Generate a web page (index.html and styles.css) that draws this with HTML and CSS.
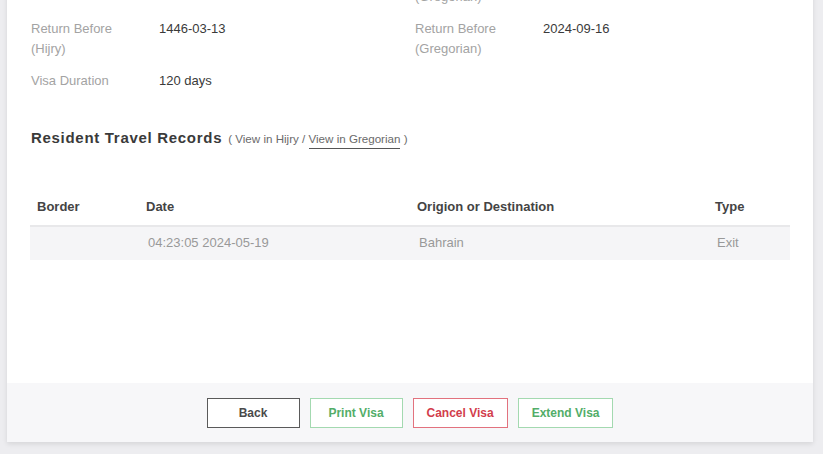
FILE: index.html
```html
<!DOCTYPE html>
<html lang="en">
<head>
<meta charset="utf-8">
<title>Visa Details</title>
<link rel="stylesheet" href="styles.css">
</head>
<body>
<div class="page">
  <div class="card">
    <div class="card-body">
      <div class="details">
        <div class="field">
          <div class="label">Issue Date</div>
          <div class="value"></div>
        </div>
        <div class="field">
          <div class="label">Issue Date<br>(Gregorian)</div>
          <div class="value"></div>
        </div>
        <div class="field">
          <div class="label">Return Before<br>(Hijry)</div>
          <div class="value">1446-03-13</div>
        </div>
        <div class="field">
          <div class="label">Return Before<br>(Gregorian)</div>
          <div class="value">2024-09-16</div>
        </div>
        <div class="field">
          <div class="label">Visa Duration</div>
          <div class="value">120 days</div>
        </div>
      </div>

      <div class="records-title">
        <h2>Resident Travel Records</h2>
        <span class="switch">( <span class="opt">View in Hijry</span> / <span class="opt active">View in Gregorian</span> )</span>
      </div>

      <table class="records">
        <thead>
          <tr>
            <th class="c-border">Border</th>
            <th class="c-date">Date</th>
            <th class="c-dest">Origion or Destination</th>
            <th class="c-type">Type</th>
          </tr>
        </thead>
        <tbody>
          <tr>
            <td></td>
            <td>04:23:05 2024-05-19</td>
            <td>Bahrain</td>
            <td>Exit</td>
          </tr>
        </tbody>
      </table>
    </div>
    <div class="card-footer">
      <button class="btn btn-back">Back</button>
      <button class="btn btn-green">Print Visa</button>
      <button class="btn btn-red">Cancel Visa</button>
      <button class="btn btn-green">Extend Visa</button>
    </div>
  </div>
</div>
</body>
</html>
```

FILE: styles.css
```css
* { box-sizing: border-box; }

html, body {
  margin: 0;
  padding: 0;
  height: 100%;
  overflow: hidden;
}

body {
  background: #ededf0;
  font-family: "Liberation Sans", Arial, sans-serif;
  color: #333;
}

.page {
  padding: 0 10px 0 7px;
}

.card {
  margin-top: -40px;
  background: #ffffff;
  box-shadow: 0 2px 5px rgba(0, 0, 0, 0.10);
}

.card-body {
  padding: 7px 23px 123px 24px;
}

.details {
  display: grid;
  grid-template-columns: 384px 1fr;
  row-gap: 12px;
}

.field {
  display: flex;
  font-size: 13px;
  line-height: 20px;
}

.label {
  width: 128px;
  flex: none;
  color: #a3a3a3;
}

.value {
  color: #3a3a3a;
}

.records-title {
  display: flex;
  align-items: baseline;
  margin-top: 37px;
  line-height: 20px;
}

.records-title h2 {
  margin: 0;
  font-size: 15px;
  font-weight: bold;
  letter-spacing: 0.7px;
  color: #3a3a3a;
}

.switch {
  margin-left: 6px;
  font-size: 11.6px;
  color: #6a6a6a;
}

.opt.active {
  display: inline-block;
  line-height: 14px;
  padding-bottom: 2px;
  border-bottom: 1px solid #555;
}

.records {
  margin-top: 42px;
  margin-left: -1px;
  width: 760px;
  border-collapse: collapse;
  font-size: 13px;
}

.records th {
  text-align: left;
  font-weight: bold;
  color: #444;
  padding: 8px 7px 10px;
  line-height: 16px;
  border-bottom: 2px solid #e8e8ea;
}

.c-border { width: 109px; }
.c-date { width: 271px; }
.c-dest { width: 298px; }

.records td {
  background: #f5f5f7;
  color: #999;
  padding: 7px 9px 9px 9px;
  line-height: 17px;
}

.card-footer {
  background: #f7f7f9;
  display: flex;
  justify-content: center;
  gap: 10px;
  padding: 15px 0 14px;
}

.btn {
  min-width: 93px;
  height: 30px;
  padding: 0 13px;
  background: #ffffff;
  font-family: "Liberation Sans", Arial, sans-serif;
  font-size: 12px;
  font-weight: bold;
  cursor: pointer;
}

.btn-back {
  border: 1px solid #5a5a5a;
  color: #4a4a4a;
}

.btn-green {
  border: 1px solid #a3d9b0;
  color: #52ad68;
}

.btn-red {
  border: 1px solid #e2727e;
  color: #d23d4c;
}
```
